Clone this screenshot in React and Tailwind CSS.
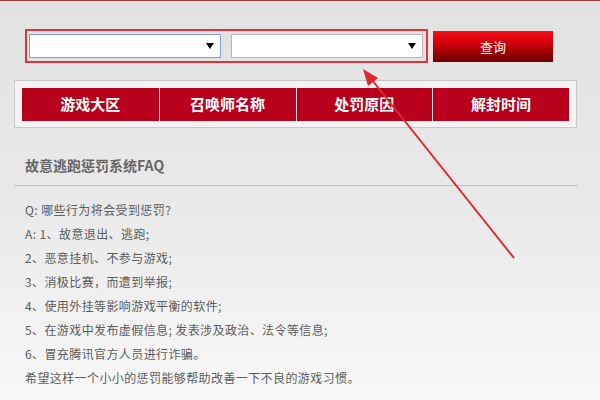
import React from 'react';

const headers = ['游戏大区', '召唤师名称', '处罚原因', '解封时间'];

const lines = [
    'Q: 哪些行为将会受到惩罚?',
    'A: 1、故意退出、逃跑;',
    '2、恶意挂机、不参与游戏;',
    '3、消极比赛，而遭到举报;',
    '4、使用外挂等影响游戏平衡的软件;',
    '5、在游戏中发布虚假信息; 发表涉及政治、法令等信息;',
    '6、冒充腾讯官方人员进行诈骗。',
    '希望这样一个小小的惩罚能够帮助改善一下不良的游戏习惯。',
];

function FakeSelect({ focused }) {
    return (
        <div className={`relative w-[192px] h-[24px] bg-white border ${focused ? 'border-[#7ea4da]' : 'border-[#b4b6bb]'}`}>
            <span className="absolute right-[6px] top-[8px] w-0 h-0 border-l-[4px] border-r-[4px] border-t-[6px] border-l-transparent border-r-transparent border-t-black"></span>
        </div>
    );
}

function App() {
    return (
        <div className="relative w-[600px] h-[400px] overflow-hidden bg-gradient-to-b from-[#e2e2e2] via-[#e9e9e9] to-[#f8f8f8] font-['Noto_Sans_CJK_SC',sans-serif] text-[#666]">
            <div className="h-[1px] bg-[#a8343e]"></div>

            {/* search row */}
            <div className="flex items-start pl-[25px] mt-[28px]">
                <div className="flex gap-[10px] border-2 border-[#e0333b] pt-[3px] pb-[3px] pl-[2px] pr-[3px]">
                    <FakeSelect focused />
                    <FakeSelect />
                </div>
                <button className="ml-[5px] mt-[2px] w-[120px] h-[31px] bg-[linear-gradient(to_bottom,#f41018_0%,#d2000a_40%,#9a0004_70%,#6a0000_100%)] text-white text-[13px] leading-[31px] text-center font-['Noto_Sans_CJK_SC',sans-serif]">
                    查询
                </button>
            </div>

            {/* result table header */}
            <div className="mx-[14px] mt-[17px] w-[563px] border border-[#c9c9c9] bg-[#f3f3f3] px-[7px] pt-[7px] pb-[6px]">
                <div className="grid grid-cols-4 h-[33px] bg-[#b8001c]">
                    {headers.map((h, i) => (
                        <div key={h} className={`flex items-center justify-center text-white font-bold text-[15px] ${i > 0 ? 'border-l border-[#f4dcdc]' : ''}`}>
                            {h}
                        </div>
                    ))}
                </div>
            </div>

            {/* FAQ */}
            <div className="mt-[27px] pl-[25px] text-[14px] leading-[20px] font-bold text-[#666]">
                故意逃跑惩罚系统FAQ
            </div>
            <div className="mt-[10px] mx-[14px] w-[564px] h-[1px] bg-[#c4c4c4]"></div>
            <div className="mt-[12px] pl-[25px] text-[12px] leading-[24px] tracking-[0.4px] text-[#5c5c5c]">
                {lines.map((l) => (
                    <div key={l}>{l}</div>
                ))}
            </div>

            {/* annotation arrow */}
            <svg className="absolute left-0 top-0 pointer-events-none" width="600" height="400">
                <line x1="514" y1="258" x2="372" y2="80" stroke="#e0262e" strokeWidth="2" />
                <polygon points="363,69 378,78 368,86" fill="#e0262e" />
            </svg>
        </div>
    );
}

export default App
